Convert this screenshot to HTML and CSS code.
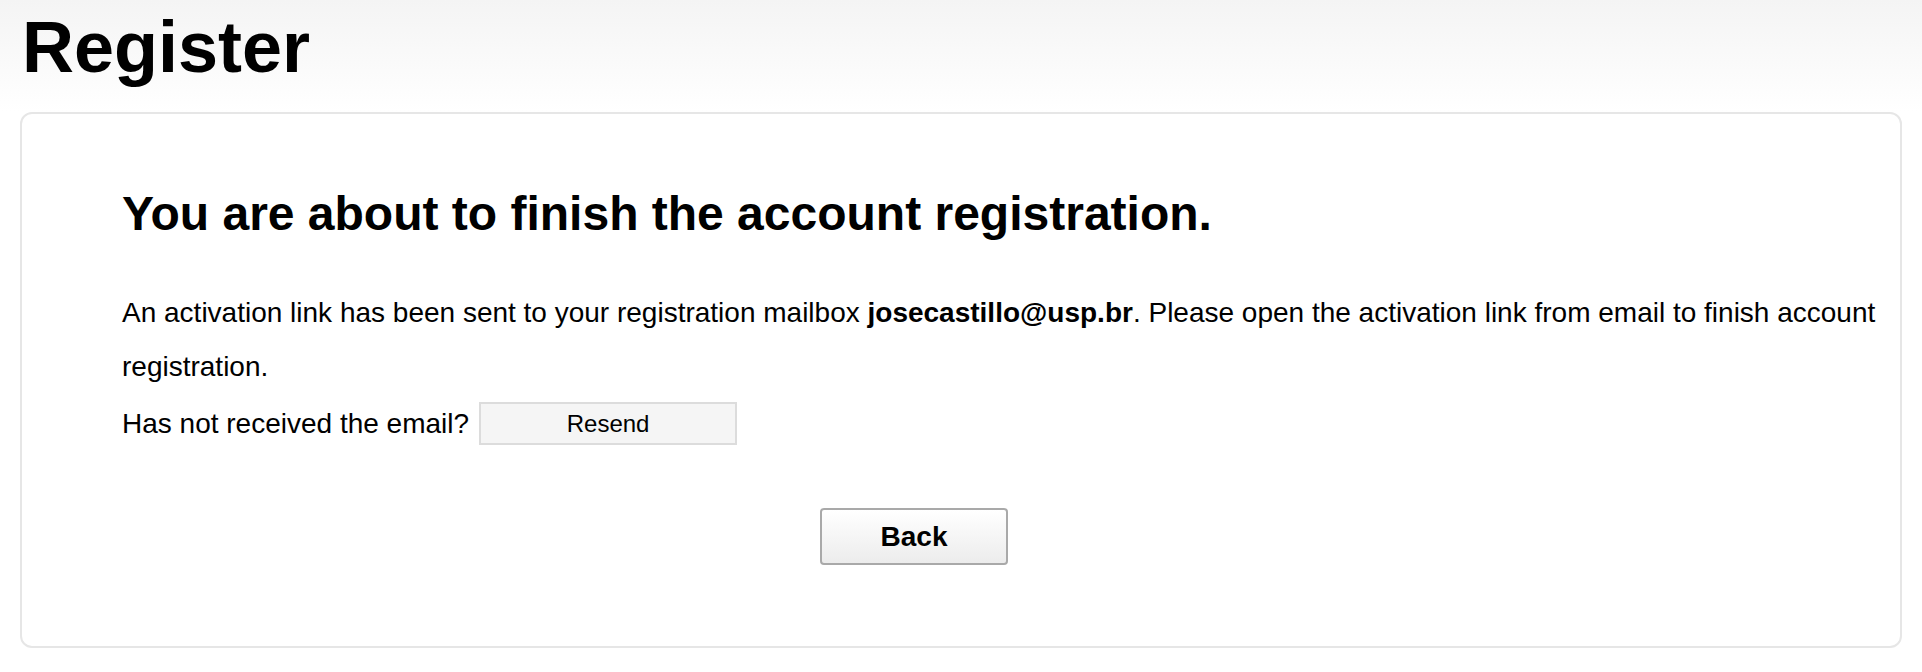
FILE: index.html
```html
<!DOCTYPE html>
<html>
<head>
<meta charset="utf-8">
<link rel="stylesheet" href="styles.css">
</head>
<body>
<div class="page">
  <header class="header">
    <h1 class="title">Register</h1>
  </header>
  <main class="card">
    <h2 class="headline">You are about to finish the account registration.</h2>
    <p class="info">An activation link has been sent to your registration mailbox <b>josecastillo@usp.br</b>. Please open the activation link from email to finish account registration.</p>
    <div class="resend-row">
      <span class="resend-label">Has not received the email?</span>
      <button class="resend" type="button">Resend</button>
    </div>
    <div class="actions">
      <button class="back" type="button">Back</button>
    </div>
  </main>
</div>
</body>
</html>
```

FILE: styles.css
```css
html, body {
  margin: 0;
  padding: 0;
  background: #fff;
}
body {
  font-family: "Liberation Sans", Arial, sans-serif;
  color: #000;
}
.page {
  width: 1922px;
  height: 672px;
  background: linear-gradient(to bottom, #f4f4f4 0px, #ffffff 112px, #ffffff 100%);
  padding: 0 20px 0 20px;
  box-sizing: border-box;
}
.header {
  height: 112px;
  display: flex;
  align-items: flex-start;
}
.title {
  margin: 5px 0 0 2px;
  font-size: 72px;
  font-weight: bold;
  line-height: 84px;
}
.card {
  height: 536px;
  border: 2px solid #e6e6e6;
  border-radius: 12px;
  background: #fff;
  box-sizing: border-box;
  padding: 72px 8px 0 100px;
}
.headline {
  margin: 0;
  font-size: 48px;
  font-weight: bold;
  line-height: 56px;
}
.info {
  margin: 44px 0 0 0;
  font-size: 28px;
  line-height: 54px;
}
.resend-row {
  display: flex;
  align-items: flex-start;
  gap: 10px;
  font-size: 28px;
  line-height: 54px;
  height: 54px;
}
.resend-label {
  padding-top: 3px;
}
.resend {
  margin-top: 8px;
  width: 258px;
  height: 43px;
  background: #f5f5f5;
  border: 2px solid #dcdcdc;
  font-family: "Liberation Sans", Arial, sans-serif;
  font-size: 24px;
  color: #000;
  padding: 0;
}
.actions {
  display: flex;
  justify-content: center;
  margin-top: 60px;
  padding-right: 186px;
}
.back {
  width: 188px;
  height: 57px;
  border: 2px solid #a9a9a9;
  border-radius: 4px;
  background: linear-gradient(to bottom, #ffffff, #ececec);
  font-family: "Liberation Sans", Arial, sans-serif;
  font-size: 28px;
  font-weight: bold;
  color: #000;
  padding: 0;
}
```
